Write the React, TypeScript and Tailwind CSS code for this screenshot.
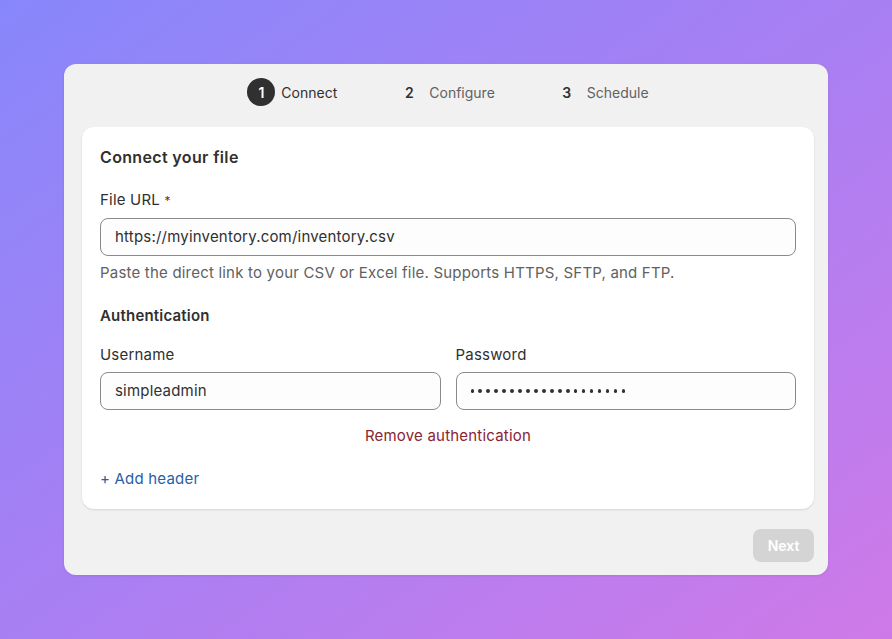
import { useState } from 'react';

const font = { fontFamily: 'Inter, "Noto Sans", sans-serif' };

function Step({ n, label, active }: { n: number; label: string; active?: boolean }) {
  return (
    <div className="flex items-center gap-[6px]">
      {active ? (
        <span className="flex h-[28px] w-[28px] items-center justify-center rounded-full bg-[#303030] text-[14px] font-semibold text-white">
          {n}
        </span>
      ) : (
        <span className="flex h-[28px] w-[28px] items-center justify-center text-[14px] font-semibold text-[#303030]">
          {n}
        </span>
      )}
      <span className={active ? 'text-[14px] text-[#303030]' : 'text-[14px] text-[#616161]'}>{label}</span>
    </div>
  );
}

const inputBox =
  'flex h-[38px] w-full items-center rounded-[8px] border border-[#8a8a8a] bg-[#fdfdfd] px-[14px] text-[15px] tracking-[0.2px] text-[#303030]';

export default function App() {
  const [url] = useState('https://myinventory.com/inventory.csv');
  const dots = Array.from({ length: 20 });

  return (
    <div
      className="flex min-h-screen w-full justify-center bg-gradient-to-br from-[#8787fb] via-[#a87ff3] to-[#cf79e8] pt-[64px]"
      style={font}
    >
      <div className="h-[511px] w-[764px] rounded-[12px] bg-[#f1f1f1] pl-[18px] pr-[14px] shadow-[0_1px_3px_rgba(0,0,0,0.08)]">
        <div className="flex h-[56px] items-center justify-center gap-[58px]">
          <Step n={1} label="Connect" active />
          <Step n={2} label="Configure" />
          <Step n={3} label="Schedule" />
        </div>

        <div className="mt-[7px] flex flex-col items-start rounded-[12px] bg-white px-[18px] pb-[21px] pt-[20px] shadow-[0_1px_2px_rgba(0,0,0,0.12)]">
          <h2 className="text-[16px] font-semibold leading-[20px] tracking-[0.35px] text-[#303030]">
            Connect your file
          </h2>

          <label className="mt-[24px] text-[15px] leading-[18px] tracking-[0.2px] text-[#303030]">
            File URL <span className="text-[12px] text-[#8e1f0b]">*</span>
          </label>
          <div className={`mt-[8px] ${inputBox}`}>{url}</div>
          <p className="mt-[8px] text-[15px] leading-[18px] tracking-[0.2px] text-[#616161]">
            Paste the direct link to your CSV or Excel file. Supports HTTPS, SFTP, and FTP.
          </p>

          <h3 className="mt-[25px] text-[15px] font-semibold leading-[18px] tracking-[0.2px] text-[#303030]">
            Authentication
          </h3>

          <div className="mt-[21px] grid w-full grid-cols-2 gap-[15px]">
            <div className="flex flex-col">
              <label className="text-[15px] leading-[18px] tracking-[0.2px] text-[#303030]">Username</label>
              <div className={`mt-[8px] ${inputBox}`}>simpleadmin</div>
            </div>
            <div className="flex flex-col">
              <label className="text-[15px] leading-[18px] tracking-[0.2px] text-[#303030]">Password</label>
              <div className={`mt-[8px] gap-[4.8px] ${inputBox}`}>
                {dots.map((_, i) => (
                  <span key={i} className="h-[3.2px] w-[3.2px] rounded-full bg-[#303030]" />
                ))}
              </div>
            </div>
          </div>

          <div className="mt-[17px] flex w-full justify-center">
            <button className="text-[15px] leading-[18px] tracking-[0.2px] text-[#8a2432]">
              Remove authentication
            </button>
          </div>

          <button className="mt-[25px] text-[15px] leading-[18px] tracking-[0.2px] text-[#2760a6]">
            + Add header
          </button>
        </div>

        <div className="mt-[20px] flex justify-end">
          <button className="h-[33px] w-[61px] rounded-[8px] bg-[#d4d4d4] text-[14px] font-semibold text-white">
            Next
          </button>
        </div>
      </div>
    </div>
  );
}
